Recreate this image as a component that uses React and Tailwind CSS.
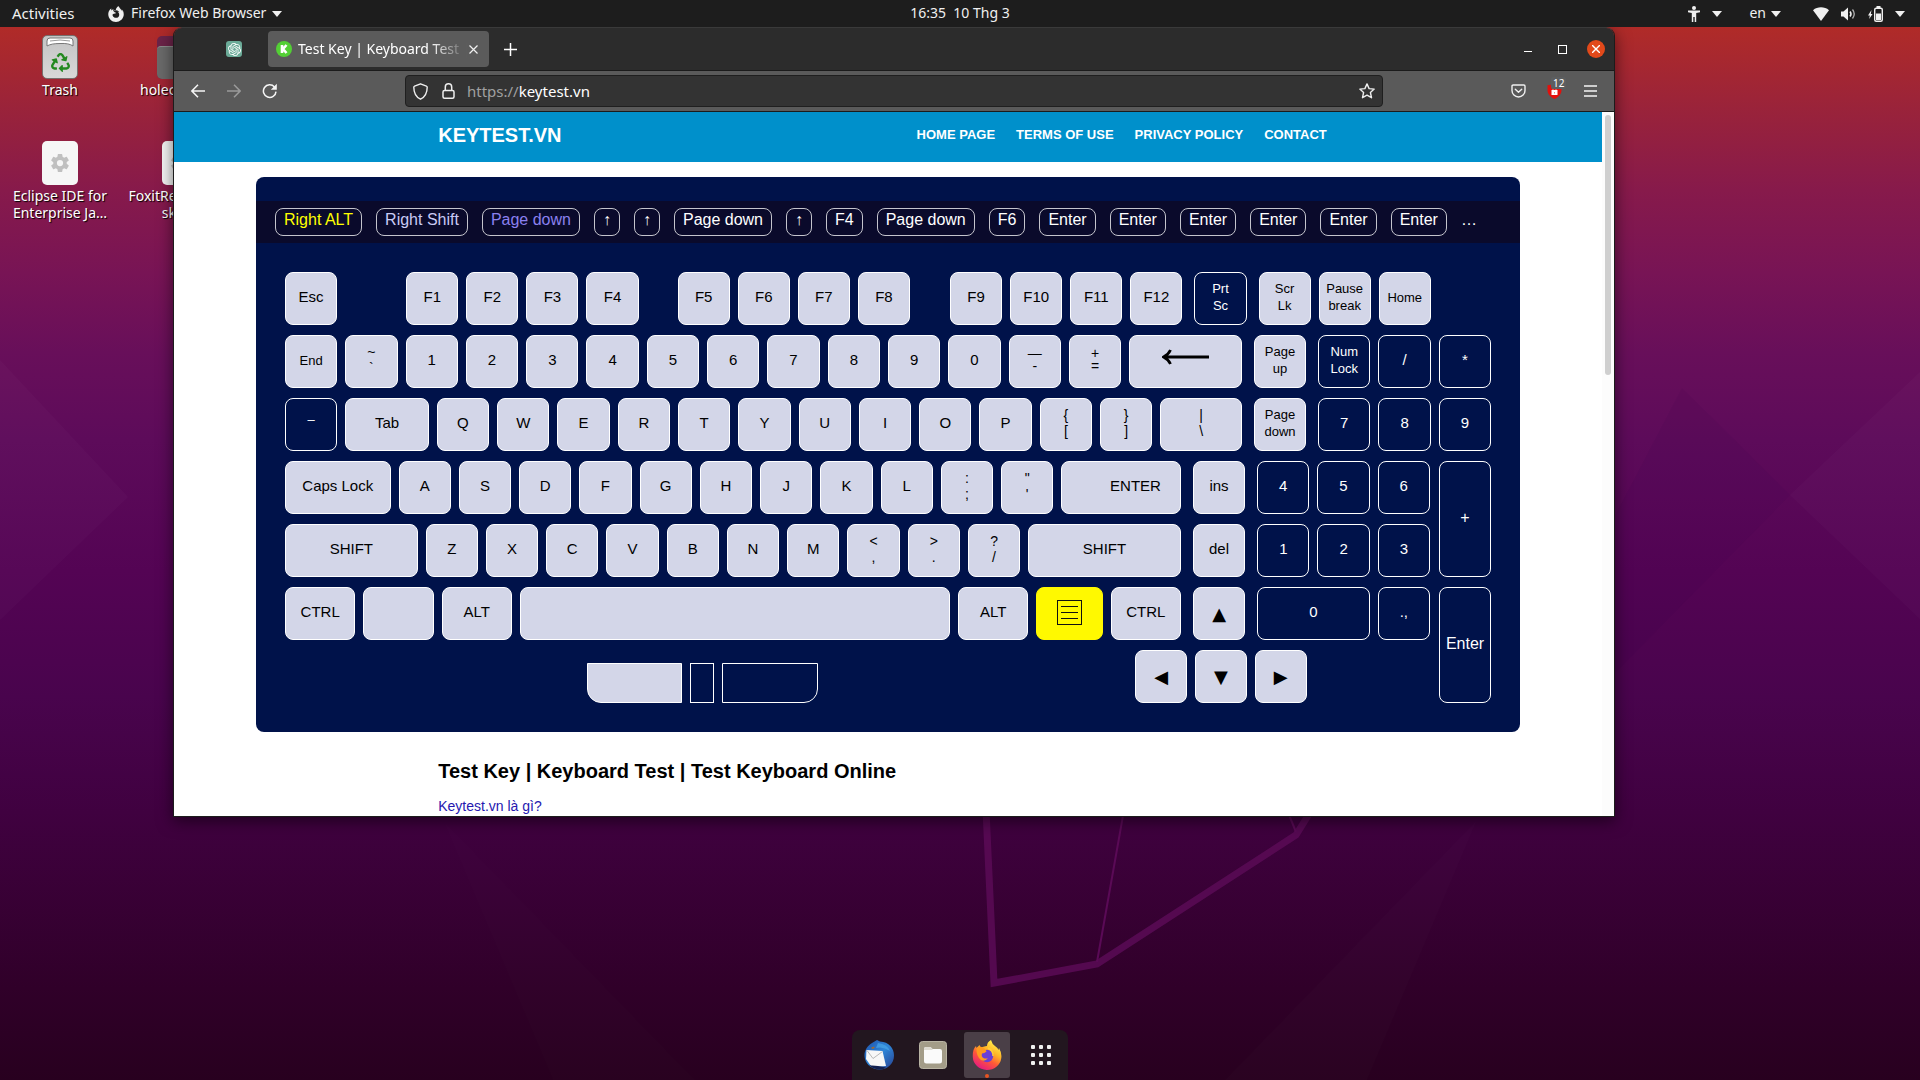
import React from "react";
import { FaRecycle } from "react-icons/fa";
import { IoSettingsSharp } from "react-icons/io5";
import { SiOpenai, SiFirefoxbrowser } from "react-icons/si";

/* Key width -> growth share; the two border pixels are already part of the base size. */
const GROW = {
  52: "grow-50",
  66: "grow-64",
  70: "grow-68",
  81: "grow-79",
  83: "grow-81",
  105: "grow-103",
  112: "grow-110",
  119: "grow-117",
  132: "grow-130",
  152: "grow-150",
  428: "grow-426",
};

/* ---------- wallpaper ---------- */

function Wallpaper() {
  return (
    <svg
      className="absolute inset-0 h-full w-full"
      viewBox="0 0 1920 1080"
      preserveAspectRatio="none"
      aria-hidden="true"
    >
      <defs>
        <linearGradient id="sky" x1="0" y1="0" x2="0" y2="1">
          <stop offset="0" stopColor="#b42d24" />
          <stop offset="0.025" stopColor="#b02b28" />
          <stop offset="0.1" stopColor="#9a233a" />
          <stop offset="0.176" stopColor="#871a4b" />
          <stop offset="0.252" stopColor="#781455" />
          <stop offset="0.326" stopColor="#680f5a" />
          <stop offset="0.407" stopColor="#5d0b5a" />
          <stop offset="0.529" stopColor="#540454" />
          <stop offset="0.645" stopColor="#49044d" />
          <stop offset="0.752" stopColor="#400140" />
          <stop offset="0.915" stopColor="#300029" />
          <stop offset="1" stopColor="#28001f" />
        </linearGradient>
      </defs>
      <rect width="1920" height="1080" fill="url(#sky)" />
      <g fill="#ffffff">
        <polygon points="0,360 128,497 0,620" opacity="0.018" />
        <polygon points="1920,372 1790,495 1920,619" opacity="0.02" />
        <polygon points="1477,820 1225,1080 1367,1080" opacity="0.012" />
        <polygon points="443,820 553,1080 695,1080" opacity="0.008" />
      </g>
      <polygon points="1682,388 1790,495 1615,673 1615,516" fill="#30004a" opacity="0.08" />
      <g fill="none" stroke="#5a0a56">
        <path d="M986 810 L994 983 L1097 964 L1296 835 L1314 806" strokeWidth="7" strokeOpacity="0.85" />
        <path d="M1124 810 L1097 962 M1287 810 L1296 832" strokeWidth="2" />
      </g>
    </svg>
  );
}

/* ---------- top panel ---------- */

function Caret() {
  return (
    <svg width="10" height="6" viewBox="0 0 10 6" fill="#f0f0f0" aria-hidden="true">
      <path d="M0 0h10L5 6z" />
    </svg>
  );
}

function TopBar() {
  return (
    <header className="relative z-10 grid h-[27px] grid-cols-3 items-center bg-[#1d1d1d] text-sm text-[#f0f0f0]">
      <div className="flex items-center">
        <button className="ml-3 w-24 pb-[2px] text-left text-[15px] leading-5">Activities</button>
        <button className="flex items-center">
          <SiFirefoxbrowser className="mr-[7px] size-4" />
          <span className="pb-[2px]">Firefox Web Browser</span>
          <span className="ml-[6px]">
            <Caret />
          </span>
        </button>
      </div>
      <button className="justify-self-center pb-[2px] whitespace-pre">16:35  10 Thg 3</button>
      <div className="flex items-center justify-end pr-[15px]">
        <button className="mr-[27px] flex items-center gap-[12px]" aria-label="Accessibility">
          <svg width="12" height="16" viewBox="0 0 12 16" fill="#f0f0f0">
            <circle cx="6" cy="2" r="2" />
            <path d="M0 4.6h12v1.6L8.2 7v9H6.7v-5H5.3v5H3.8V7L0 6.2z" />
          </svg>
          <Caret />
        </button>
        <button className="mr-[32px] flex items-center gap-[5px]">
          <span className="pb-[2px]">en</span>
          <Caret />
        </button>
        <button className="flex items-center gap-[12px]" aria-label="System menu">
          <svg width="16" height="14" viewBox="0 0 16 14" fill="#f0f0f0">
            <path d="M8 14L0 3.2C4.500 -0.600 11.500 -0.600 16 3.200z" />
          </svg>
          <svg width="15" height="14" viewBox="0 0 15 14" fill="none" stroke="#f0f0f0">
            <path d="M0 4.500h2.500L7 .5v13L2.500 9.500H0z" fill="#f0f0f0" stroke="none" />
            <path d="M9 4.500q2 2.500 0 5" strokeWidth="1.500" />
            <path d="M11.500 2.500q3.500 4.500 0 9" strokeWidth="1.300" opacity=".7" />
          </svg>
          <svg width="15" height="16" viewBox="0 0 15 16">
            <path d="M3.500 4L0 9.500h1.800L1.200 13 4.500 8H2.800z" fill="#f0f0f0" />
            <rect x="6.700" y="2.200" width="7.600" height="13" rx="1.500" fill="none" stroke="#f0f0f0" strokeWidth="1.400" />
            <rect x="8.500" y="0" width="4" height="2" fill="#f0f0f0" />
            <rect x="8" y="7.500" width="5" height="6.500" fill="#f0f0f0" />
          </svg>
          <Caret />
        </button>
      </div>
    </header>
  );
}

/* ---------- desktop icons ---------- */

function TrashIcon() {
  return (
    <div className="flex h-11 w-9 flex-col items-center rounded-[5px] border border-[#77706e] bg-gradient-to-b from-[#c4c4c4] to-[#d8d8d8]">
      <svg width="30" height="11" viewBox="0 0 30 11" aria-hidden="true">
        <path d="M2 10V5q0-3 3-3h20q3 0 3 3v5q-4-3-13-2.500Q6 7.500 2 10z" fill="#fff" stroke="#777" />
        <path d="M5 5q10-2 20 0" stroke="#999" fill="none" />
      </svg>
      <FaRecycle className="mt-[6px] size-[19px] text-[#23891f]" />
    </div>
  );
}

function DocIcon() {
  return (
    <div className="flex h-11 w-9 items-center justify-center rounded-[5px] bg-[#f6f6f6]">
      <IoSettingsSharp className="size-5 text-[#c0c0c0]" />
    </div>
  );
}

const DESK_TEXT =
  "text-center text-sm leading-[17px] text-white [text-shadow:1px_1px_1px_#000]";

function DesktopIcons() {
  return (
    <>
      <div className="absolute top-[35px] left-0 flex w-[120px] flex-col items-center gap-[2px]">
        <TrashIcon />
        <span className={DESK_TEXT}>Trash</span>
      </div>
      <div className="absolute top-[141px] left-0 flex w-[120px] flex-col items-center gap-[2px]">
        <DocIcon />
        <span className={DESK_TEXT}>
          Eclipse IDE for
          <br />
          Enterprise Ja…
        </span>
      </div>
      <div className="absolute top-[36px] left-[140px] flex w-[80px] flex-col items-center gap-[2px]">
        <div className="h-[43px] w-[46px] overflow-hidden rounded-[5px] bg-[#6b2348] pt-[10px]">
          <div className="h-full rounded-t-[4px] border-t border-[#8c8c8c] bg-[#6a6a6a]" />
        </div>
        <span className={DESK_TEXT + " self-start"}>holec</span>
      </div>
      <div className="absolute top-[141px] left-[128px] flex w-[104px] flex-col items-center gap-[2px]">
        <DocIcon />
        <span className={DESK_TEXT + " whitespace-nowrap"}>
          FoxitReader.des
          <br />
          sktop
        </span>
      </div>
    </>
  );
}

/* ---------- browser chrome ---------- */

function TabStrip() {
  return (
    <div className="flex h-[43px] items-center border-b border-[#1b1b1b] bg-[#2c2c2c]">
      <button className="ml-[52px] flex size-4 items-center justify-center rounded-[3px] bg-[#6bab98]" aria-label="ChatGPT tab">
        <SiOpenai className="size-[13px] text-white" />
      </button>
      <div className="ml-[26px] flex h-9 w-[221px] items-center rounded-[4px] bg-[#5b5b5b] pl-2 text-white">
        <svg width="16" height="16" viewBox="0 0 16 16" className="shrink-0" aria-hidden="true">
          <circle cx="8" cy="8" r="8" fill="#53cf35" />
          <path d="M6 4v8M10.500 4L7 8l3.500 4" stroke="#fff" strokeWidth="2.600" fill="none" />
        </svg>
        <button className="ml-[6px] w-[169px] text-left text-sm whitespace-nowrap [mask-image:linear-gradient(to_right,black_78%,transparent)]">
          Test Key | Keyboard Test |
        </button>
        <button className="ml-[2px]" aria-label="Close tab">
          <svg width="9" height="9" viewBox="0 0 9 9" stroke="#f0f0f0" strokeWidth="1.200">
            <path d="M.5.5l8 8M8.500.5l-8 8" />
          </svg>
        </button>
      </div>
      <button className="ml-[15px]" aria-label="New tab">
        <svg width="13" height="13" viewBox="0 0 13 13" stroke="#fff" strokeWidth="1.500">
          <path d="M6.500 0v13M0 6.500h13" />
        </svg>
      </button>
      <div className="ml-auto flex items-center pr-[9px]">
        <button className="mr-[26px]" aria-label="Minimize">
          <svg width="8" height="8" viewBox="0 0 8 8" stroke="#fff" strokeWidth="1">
            <path d="M0 6.500h8" />
          </svg>
        </button>
        <button className="mr-[20px]" aria-label="Maximize">
          <svg width="9" height="9" viewBox="0 0 9 9" fill="none" stroke="#fff">
            <rect x=".5" y=".5" width="8" height="8" />
          </svg>
        </button>
        <button className="flex size-[18px] items-center justify-center rounded-full bg-[#e2491a]" aria-label="Close">
          <svg width="8" height="8" viewBox="0 0 8 8" stroke="#fff" strokeWidth="1.400">
            <path d="M0 0l8 8M8 0L0 8" />
          </svg>
        </button>
      </div>
    </div>
  );
}

function Toolbar() {
  return (
    <div className="flex h-[41px] items-center border-b border-[#1b1b1b] bg-[#5a5a5a]">
      <div className="flex w-[231px] shrink-0 items-center pl-[17px]">
        <button aria-label="Back">
          <svg width="14" height="14" viewBox="0 0 14 14" fill="none" stroke="#f5f5f5" strokeWidth="1.500">
            <path d="M14 7H1M7 .8L.9 7 7 13.200" />
          </svg>
        </button>
        <button className="ml-[22px]" aria-label="Forward" disabled>
          <svg width="14" height="14" viewBox="0 0 14 14" fill="none" stroke="#9a9a9a" strokeWidth="1.500">
            <path d="M0 7h13M7 .8L13.100 7 7 13.200" />
          </svg>
        </button>
        <button className="ml-[21px]" aria-label="Reload">
          <svg width="16" height="16" viewBox="0 0 16 16" fill="none" stroke="#f5f5f5" strokeWidth="1.500">
            <path d="M12.500 4A6.300 6.300 0 1 0 14 8.600" />
            <path d="M14.800.8v6h-6z" fill="#f5f5f5" stroke="none" />
          </svg>
        </button>
      </div>
      <div className="flex h-8 flex-1 items-center rounded-[4px] border border-[#1f1f1f] bg-[#333333] px-[7px]">
        <svg width="15" height="17" viewBox="0 0 15 17" fill="none" stroke="#eee" strokeWidth="1.400" aria-hidden="true">
          <path d="M7.500.8L1.600 3.100Q.8 3.400.8 4.200C.8 9.500 3 14 7.500 16.200 12 14 14.200 9.500 14.200 4.200q0-.8-.8-1.100z" strokeLinejoin="round" />
        </svg>
        <svg className="ml-[14px]" width="13" height="16" viewBox="0 0 13 16" fill="none" stroke="#eee" strokeWidth="1.500" aria-hidden="true">
          <rect x="1" y="7.500" width="11" height="7.700" rx="1.500" />
          <path d="M3.300 7.500V4a3.200 3.200 0 0 1 6.400 0v3.500" />
        </svg>
        <div className="ml-3 flex-1 text-[15px] leading-5 text-[#a0a0a0]">
          https://<span className="text-white">keytest.vn</span>
        </div>
        <button aria-label="Bookmark this page">
          <svg width="16" height="16" viewBox="0 0 16 16" fill="none" stroke="#eee" strokeWidth="1.400" strokeLinejoin="round">
            <path d="M8 .9l2.100 4.700 5.100.5-3.800 3.400 1.100 5.200L8 12.100l-4.500 2.600 1.100-5.200L.8 6.100l5.100-.5z" />
          </svg>
        </button>
      </div>
      <div className="flex w-[231px] shrink-0 items-center justify-end pr-[17px]">
        <button aria-label="Pocket">
          <svg width="15" height="14" viewBox="0 0 15 14" fill="none" stroke="#f0f0f0" strokeWidth="1.400" strokeLinecap="round" strokeLinejoin="round">
            <path d="M2.200 1h10.600q1.200 0 1.200 1.200V6.500a6.500 6.500 0 0 1-13 0V2.200Q1 1 2.200 1z" />
            <path d="M4.300 5.200l3.200 3 3.200-3" />
          </svg>
        </button>
        <button className="relative ml-[21px]" aria-label="Content blocker, 12 blocked">
          <svg width="15" height="16" viewBox="0 0 15 16">
            <path d="M7.500 0Q4 2.200.5 2.200V7c0 4 2.500 7 7 9 4.500-2 7-5 7-9V2.200Q11 2.200 7.500 0z" fill="#e3100c" />
            <path d="M4.500 7h6v5h-6z" fill="#fff" />
            <path d="M6 7V5.500h3V7M7.500 9v1.500" stroke="#e88" fill="none" />
          </svg>
          <span className="absolute -top-[6px] left-[4px] rounded-[2px] bg-[#5c5e60] px-[2px] text-[10px] leading-3 text-white">12</span>
        </button>
        <button className="ml-[22px]" aria-label="Open menu">
          <svg width="13" height="12" viewBox="0 0 13 12" stroke="#f5f5f5" strokeWidth="1.400">
            <path d="M0 1h13M0 6h13M0 11h13" />
          </svg>
        </button>
      </div>
    </div>
  );
}

/* ---------- keyboard tester ---------- */

const HISTORY = [
  "Right ALT", "Right Shift", "Page down", "↑", "↑", "Page down", "↑", "F4",
  "Page down", "F6", "Enter", "Enter", "Enter", "Enter", "Enter", "Enter",
];

const HISTORY_COLORS = ["text-[#ffff00]", "text-[#c9cbf5]", "text-[#8a80f0]"];

const TONES = {
  light: "border-white bg-[#d3d6e8] text-black",
  dark: "border-white text-white",
  yellow: "border-[#fff900] bg-[#fff900] text-black",
};

function Key({ label, lines, w = 52, tone = "light", gapBefore = false, small = false, tight = false, children, name }) {
  return (
    <button
      aria-label={name}
      className={[
        "flex h-[53px] min-w-0 basis-0 flex-col items-center justify-center rounded-lg border pb-[3px]",
        GROW[w],
        TONES[tone],
        gapBefore ? "ml-1" : "",
        small ? "text-[13px] leading-[17px]" : lines ? "text-sm" : "text-[15px] leading-5",
        lines && !small ? (tight ? "leading-[13px]" : "leading-4") : "",
      ].join(" ")}
    >
      {label}
      {lines && lines.map((l, i) => <span key={i}>{l}</span>)}
      {children}
    </button>
  );
}

function TallKey({ children }) {
  return (
    <button className="flex flex-1 items-center justify-center rounded-lg border border-white pb-[3px] text-base text-white">
      {children}
    </button>
  );
}

function Gap({ className }) {
  return <div className={"min-w-0 basis-0 " + className} />;
}

function Row({ children }) {
  return <div className="flex gap-2">{children}</div>;
}

const keys = (text) => text.split(" ").map((k) => <Key key={k} label={k} />);

function Glyph({ children }) {
  return <span className="pt-1 font-['DejaVu_Sans',sans-serif] text-lg leading-5">{children}</span>;
}

function Keyboard() {
  return (
    <section className="mx-auto mt-[15px] w-[calc(100%-164px)] rounded-lg bg-[#00124a] pt-6" aria-label="Keyboard tester">
      <div className="flex h-[42px] gap-[14px] overflow-hidden bg-[#0a0a2b] pt-[7px] pl-[19px] text-base leading-5 whitespace-nowrap text-white">
        {HISTORY.map((k, i) => (
          <span
            key={i}
            className={
              "h-7 rounded-lg border border-[#c4c4cc] px-2 pt-px " +
              (HISTORY_COLORS[i] || "text-white")
            }
          >
            {k}
          </span>
        ))}
        <span className="pt-[2px]">…</span>
      </div>

      <div className="flex flex-col gap-[10px] p-[29px]">
        <Row>
          <Key label="Esc" />
          <Gap className="grow-53" />
          {keys("F1 F2 F3 F4")}
          <Gap className="grow-23" />
          {keys("F5 F6 F7 F8")}
          <Gap className="grow-24" />
          {keys("F9 F10 F11 F12")}
          <Key lines={["Prt", "Sc"]} small tone="dark" gapBefore />
          <Key lines={["Scr", "Lk"]} small gapBefore />
          <Key lines={["Pause", "break"]} small />
          <Key label="Home" small />
          <Gap className="grow-52" />
        </Row>
        <Row>
          <Key label="End" small />
          <Key lines={["~", "`"]} />
          {keys("1 2 3 4 5 6 7 8 9 0")}
          <Key lines={["—", "-"]} tight />
          <Key lines={["+", "="]} tight />
          <Key w={112} name="Backspace">
            <svg width="47" height="16" viewBox="0 0 47 16" fill="none" stroke="#000" strokeWidth="2.800" className="mb-[6px]">
              <path d="M47 8H4M8.500 1Q6.500 5.500 1.500 8q5 2.500 7 7" />
            </svg>
          </Key>
          <Key lines={["Page", "up"]} small gapBefore />
          <Key lines={["Num", "Lock"]} small tone="dark" gapBefore />
          <Key label="/" tone="dark" />
          <Key label="*" tone="dark" />
        </Row>
        <Row>
          <Key tone="dark" small lines={["–"]}>
            <span className="h-2" />
          </Key>
          <Key label="Tab" w={83} />
          {keys("Q W E R T Y U I O P")}
          <Key lines={["{", "["]} />
          <Key lines={["}", "]"]} />
          <Key lines={["|", "\\"]} w={81} />
          <Key lines={["Page", "down"]} small gapBefore />
          <Key label="7" tone="dark" gapBefore />
          <Key label="8" tone="dark" />
          <Key label="9" tone="dark" />
        </Row>

        <div className="flex gap-[9px]">
          <div className="flex flex-1 flex-col gap-[10px]">
            <Row>
              <Key label="Caps Lock" w={105} />
              {keys("A S D F G H J K L")}
              <Key lines={[":", ";"]} />
              <Key lines={['"', "'"]} />
              <Key w={119}>
                <span className="self-end pr-[19px]">ENTER</span>
              </Key>
              <Key label="ins" gapBefore />
              <Key label="4" tone="dark" gapBefore />
              <Key label="5" tone="dark" />
              <Key label="6" tone="dark" />
            </Row>
            <Row>
              <Key label="SHIFT" w={132} />
              {keys("Z X C V B N M")}
              <Key lines={["<", ","]} />
              <Key lines={[">", "."]} />
              <Key lines={["?", "/"]} />
              <Key label="SHIFT" w={152} />
              <Key label="del" gapBefore />
              <Key label="1" tone="dark" gapBefore />
              <Key label="2" tone="dark" />
              <Key label="3" tone="dark" />
            </Row>
            <Row>
              <Key label="CTRL" w={70} />
              <Key name="Super" w={70} />
              <Key label="ALT" w={70} />
              <Key name="Space" w={428} />
              <Key label="ALT" w={70} />
              <Key name="Menu" w={66} tone="yellow">
                <svg width="25" height="25" viewBox="0 0 25 25" fill="none" stroke="#111" strokeWidth="1">
                  <rect x=".5" y=".5" width="24" height="24" />
                  <path d="M4 6.500h17M4 12.500h17M4 18.500h17" />
                </svg>
              </Key>
              <Key label="CTRL" w={70} />
              <Key gapBefore name="Up">
                <Glyph>▲</Glyph>
              </Key>
              <Key label="0" w={112} tone="dark" gapBefore />
              <Key label=".," tone="dark" />
            </Row>
            <Row>
              <Gap className="grow-295" />
              <button aria-label="Left mouse button" className="h-10 min-w-0 grow-94 basis-0 self-end rounded-bl-[14px] border border-white bg-[#d3d6e8]" />
              <button aria-label="Middle mouse button" className="h-10 min-w-0 grow-22 basis-0 self-end border border-white" />
              <button aria-label="Right mouse button" className="h-10 min-w-0 grow-94 basis-0 self-end rounded-br-[14px] border border-white" />
              <Gap className="grow-303" />
              <Key name="Left">
                <Glyph>◀</Glyph>
              </Key>
              <Key name="Down">
                <Glyph>▼</Glyph>
              </Key>
              <Key name="Right">
                <Glyph>▶</Glyph>
              </Key>
              <Gap className="grow-116" />
            </Row>
          </div>
          <div className="flex w-[52px] flex-col gap-[10px]">
            <TallKey>+</TallKey>
            <TallKey>Enter</TallKey>
          </div>
        </div>
      </div>
    </section>
  );
}

function Page() {
  return (
    <div className="flex min-h-0 flex-1 overflow-hidden bg-white font-['Liberation_Sans',sans-serif]">
      <main className="min-w-0 flex-1 overflow-hidden">
        <div className="h-[50px] bg-[#0090cb]">
          <div className="mx-auto flex h-[46px] w-[63%] items-center justify-between font-bold text-white">
            <a href="#home" className="text-xl">KEYTEST.VN</a>
            <nav className="flex gap-[21px] pr-[11px] text-[13px]">
              <a href="#home">HOME PAGE</a>
              <a href="#terms">TERMS OF USE</a>
              <a href="#privacy">PRIVACY POLICY</a>
              <a href="#contact">CONTACT</a>
            </nav>
          </div>
        </div>
        <Keyboard />
        <article className="mx-auto w-[63%] pt-[25px] text-black">
          <h1 className="text-xl leading-7 font-bold">Test Key | Keyboard Test | Test Keyboard Online</h1>
          <a href="#about" className="mt-[11px] block text-sm text-[#2518b0]">Keytest.vn là gì?</a>
        </article>
      </main>
      <div className="w-3 shrink-0 bg-[#fcfcfc] pt-[3px] pl-[3px]">
        <div className="h-[260px] w-[6px] rounded-full bg-[#cfcfcf]" />
      </div>
    </div>
  );
}

/* ---------- dock ---------- */

function Dock() {
  return (
    <nav className="absolute bottom-0 left-1/2 flex h-[50px] -translate-x-1/2 gap-2 rounded-t-lg bg-[#22161f] px-1 pt-[2px]" aria-label="Dock">
      <button className="flex h-[46px] w-[46px] items-center justify-center" aria-label="Thunderbird">
        <svg width="30" height="30" viewBox="0 0 30 30">
          <defs>
            <linearGradient id="tb" x1="0" y1="0" x2="1" y2="1">
              <stop offset="0" stopColor="#1f4fa8" />
              <stop offset=".5" stopColor="#2f86d8" />
              <stop offset="1" stopColor="#27408f" />
            </linearGradient>
          </defs>
          <path d="M8 3L13 0l3 1.500C25 2 30 8 30 15.500 30 24 23 30 15 29.500 9 29 3 26 1 19-1 12 3 6 8 3z" fill="url(#tb)" />
          <path d="M14 3q9 1 12 8-7-5-14-3z" fill="#49a7e8" opacity=".7" />
          <path d="M2.500 10l16 1 3.500 15-7 .5L7 26 2 19z" fill="#f7f7f7" />
          <path d="M3 10.500l6 8 9.500-7" fill="none" stroke="#b9b9b9" />
          <path d="M3 23q2 3 5 2.500l6 .5 8 1.500q-3 2.500-7 2-8-1-12-6.500z" fill="#13204f" />
          <path d="M7 8q2-2 4-1l-2 2z" fill="#a66a2c" />
        </svg>
      </button>
      <button className="flex h-[46px] w-[46px] items-center justify-center" aria-label="Files">
        <svg width="28" height="28" viewBox="0 0 28 28">
          <rect x=".5" y=".5" width="27" height="27" rx="3" fill="#a39c88" stroke="#b9b4a4" />
          <path d="M5 8q0-2 2-2h4.500l2 2H21q2 0 2 2v10q0 2.500-2.500 2.500h-13Q5 22.500 5 20z" fill="#fafafa" />
          <path d="M5 8q0-2 2-2h4.500l2 2v1H5z" fill="#dedbd2" />
        </svg>
      </button>
      <button className="relative flex h-[46px] w-[46px] items-center justify-center rounded-[3px] bg-[#4a3f47]" aria-label="Firefox">
        <svg width="30" height="30" viewBox="0 0 30 30">
          <defs>
            <linearGradient id="ff" x1=".8" y1=".05" x2=".25" y2="1">
              <stop offset="0" stopColor="#fff44f" />
              <stop offset=".35" stopColor="#ffb326" />
              <stop offset=".6" stopColor="#ff5a36" />
              <stop offset="1" stopColor="#e31587" />
            </linearGradient>
          </defs>
          <path d="M19 0q1 4 4 6t3.500 4l.5-2q3 5 2.300 10A14.300 13.500 0 0 1 .8 17Q.5 9 4 6l.5 2L7.500 5l1 2.500 2-.5Q14 6 15 6q0-4 4-6z" fill="url(#ff)" />
          <circle cx="15" cy="16" r="6.200" fill="#6a3fd6" />
          <path d="M4.500 8L8 6.500q5 1 6.500 5-2 2-4.500 2-1 3 1.500 4.500 2 1 4.500.2-3 3.800-7 1.800Q4 16 4.500 8z" fill="#ff9a1f" />
          <path d="M16 8q5 2 5 8" stroke="#ffce3a" strokeWidth="1.500" fill="none" />
        </svg>
        <span className="absolute bottom-0 size-1 rounded-full bg-[#e95420]" />
      </button>
      <button className="flex h-[46px] w-[46px] items-center justify-center" aria-label="Show applications">
        <span className="grid grid-cols-3 gap-1">
          {Array.from({ length: 9 }, (_, i) => (
            <span key={i} className="size-1 rounded-[1px] bg-[#f0f0f0]" />
          ))}
        </span>
      </button>
    </nav>
  );
}

export default function App() {
  return (
    <div className="relative h-screen overflow-hidden bg-[#28001f] font-['Noto_Sans','Open_Sans',sans-serif]">
      <Wallpaper />
      <TopBar />
      <DesktopIcons />
      <div className="absolute top-[27px] right-[305px] bottom-[263px] left-[173px] flex flex-col overflow-hidden rounded-t-[9px] border border-[#1c1c1c] border-t-[#3a3a3a] shadow-[0_4px_16px_rgba(0,0,0,0.55)]">
        <TabStrip />
        <Toolbar />
        <Page />
      </div>
      <Dock />
    </div>
  );
}
